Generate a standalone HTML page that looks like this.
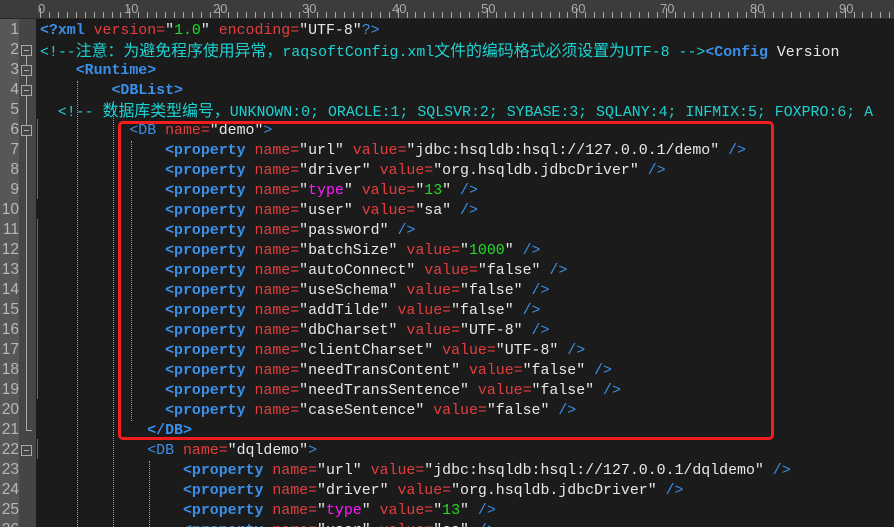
<!DOCTYPE html>
<html><head><meta charset="utf-8"><style>
html,body{margin:0;width:894px;height:527px;overflow:hidden;}
body{background:#1b1b1b;position:relative;font-family:"Liberation Mono","Noto Sans CJK SC",monospace;}
#ruler{position:absolute;left:0;top:0;width:894px;height:18px;background:#3c3c3c;border-bottom:1px solid #2a2a2a;overflow:hidden}
#ln{position:absolute;left:0;top:19px;width:19px;height:508px;background:#575757}
#fold{position:absolute;left:19px;top:19px;width:17px;height:508px;background:#454545}
.n{position:absolute;left:0;width:19px;text-align:right;color:#b8b8b8;font-family:"Liberation Sans",sans-serif;font-size:15.5px;line-height:20px}
.l{position:absolute;left:40px;height:20px;line-height:20px;font-size:14.9px;white-space:pre;color:#e8e8e8}
.t{color:#3a8fe8;font-weight:bold}.tn{color:#3a8fe8}
.a{color:#e53c3c}.g{color:#22dd22}.m{color:#ff1aff}.c{color:#1ed2d2}
.k{font-size:15.9px;font-family:"Noto Sans CJK SC",sans-serif;line-height:18px}
.fb{position:absolute;left:21px;width:9px;height:9px;border:1px solid #aaa;background:#454545}
.fb:after{content:"";position:absolute;left:2px;top:4px;width:5px;height:1px;background:#aaa}
.ch{position:absolute;left:37px;width:1px;height:20px;background:#d020d0}
.ig{position:absolute;width:0;border-left:1px dotted #9a9a9a}
#box{position:absolute;left:118px;top:121px;width:650px;height:313px;border:3px solid #f21e1e;border-radius:5px}
.tk{position:absolute;top:12px;width:1px;height:6px;background:#aaa}
.rl{position:absolute;top:1px;font-family:"Liberation Sans",sans-serif;font-size:13px;color:#aaa}
</style></head><body>
<div id="ruler">
<div class="rl" style="left:38px">0</div><div class="rl" style="left:124px">10</div><div class="rl" style="left:213px">20</div><div class="rl" style="left:302px">30</div><div class="rl" style="left:392px">40</div><div class="rl" style="left:481px">50</div><div class="rl" style="left:571px">60</div><div class="rl" style="left:660px">70</div><div class="rl" style="left:750px">80</div><div class="rl" style="left:839px">90</div>
<div id="ticks"></div>
</div>
<div id="ln"></div><div id="fold"></div>
<div style="position:absolute;left:26px;top:55px;width:1px;height:376px;background:#aaa"></div>
<div style="position:absolute;left:26px;top:430px;width:6px;height:1px;background:#aaa"></div>
<div class="fb" style="top:45px"></div><div class="fb" style="top:65px"></div><div class="fb" style="top:85px"></div><div class="fb" style="top:125px"></div><div class="fb" style="top:445px"></div>
<div class="ch" style="top:119px;height:80px"></div><div class="ch" style="top:219px;height:160px"></div><div class="ch" style="top:379px;height:20px"></div><div class="ch" style="top:439px"></div>
<div class="ig" style="left:77px;top:81px;height:446px"></div>
<div class="ig" style="left:113px;top:101px;height:426px"></div>
<div class="ig" style="left:131px;top:141px;height:280px"></div>
<div class="ig" style="left:149px;top:461px;height:66px"></div>
<div id="nums"></div>
<div class="l" style="top:21px"><span class="t">&lt;?xml</span> <span class="a">version=</span>"<span class="g">1.0</span>" <span class="a">encoding=</span>"UTF-8"<span class="tn">?&gt;</span></div>
<div class="l" style="top:41px"><span class="c">&lt;!--<span class="k">注意：为避免程序使用异常，</span>raqsoftConfig.xml<span class="k">文件的编码格式必须设置为</span>UTF-8 --&gt;</span><span class="t">&lt;Config</span> Version</div>
<div class="l" style="top:61px">    <span class="t">&lt;Runtime&gt;</span></div>
<div class="l" style="top:81px">        <span class="t">&lt;DBList&gt;</span></div>
<div class="l" style="top:101px"><span class="c">  &lt;!-- <span class="k">数据库类型编号，</span>UNKNOWN:0; ORACLE:1; SQLSVR:2; SYBASE:3; SQLANY:4; INFMIX:5; FOXPRO:6; A</span></div>
<div class="l" style="top:121px">          <span class="tn">&lt;DB</span> <span class="a">name=</span>"demo"<span class="tn">&gt;</span></div>
<div id="props"></div>
<div class="l" style="top:421px">            <span class="t">&lt;/DB&gt;</span></div>
<div class="l" style="top:441px">            <span class="tn">&lt;DB</span> <span class="a">name=</span>"dqldemo"<span class="tn">&gt;</span></div>
<div class="l" style="top:461px">                <span class="t">&lt;property</span> <span class="a">name=</span>"url" <span class="a">value=</span>"jdbc:hsqldb:hsql://127.0.0.1/dqldemo" <span class="tn">/&gt;</span></div>
<div class="l" style="top:481px">                <span class="t">&lt;property</span> <span class="a">name=</span>"driver" <span class="a">value=</span>"org.hsqldb.jdbcDriver" <span class="tn">/&gt;</span></div>
<div class="l" style="top:501px">                <span class="t">&lt;property</span> <span class="a">name=</span>"<span class="m">type</span>" <span class="a">value=</span>"<span class="g">13</span>" <span class="tn">/&gt;</span></div>
<div class="l" style="top:521px">                <span class="t">&lt;property</span> <span class="a">name=</span>"user" <span class="a">value=</span>"sa" <span class="tn">/&gt;</span></div>
<div id="box"></div>
<script>
var p=[["url","jdbc:hsqldb:hsql://127.0.0.1/demo"],["driver","org.hsqldb.jdbcDriver"],["<span class='m'>type</span>","<span class='g'>13</span>"],["user","sa"],["password",null],["batchSize","<span class='g'>1000</span>"],["autoConnect","false"],["useSchema","false"],["addTilde","false"],["dbCharset","UTF-8"],["clientCharset","UTF-8"],["needTransContent","false"],["needTransSentence","false"],["caseSentence","false"]];
var h="";p.forEach(function(x,i){h+='<div class="l" style="top:'+(141+20*i)+'px">              <span class="t">&lt;property</span> <span class="a">name=</span>"'+x[0]+'" '+(x[1]!==null?'<span class="a">value=</span>"'+x[1]+'" ':'')+'<span class="tn">/&gt;</span></div>';});
document.getElementById("props").innerHTML=h;
var n="";for(var i=1;i<=26;i++)n+='<div class="n" style="top:'+(20+20*(i-1))+'px">'+i+'</div>';
document.getElementById("nums").innerHTML=n;
var t="";for(var c=0;c<=96;c++){t+='<div class="tk" style="left:'+Math.round(40+8.94*c)+'px;'+(c%10==0?'top:8px;height:10px':'')+'"></div>';}
document.getElementById("ticks").innerHTML=t;
</script>
</body></html>
